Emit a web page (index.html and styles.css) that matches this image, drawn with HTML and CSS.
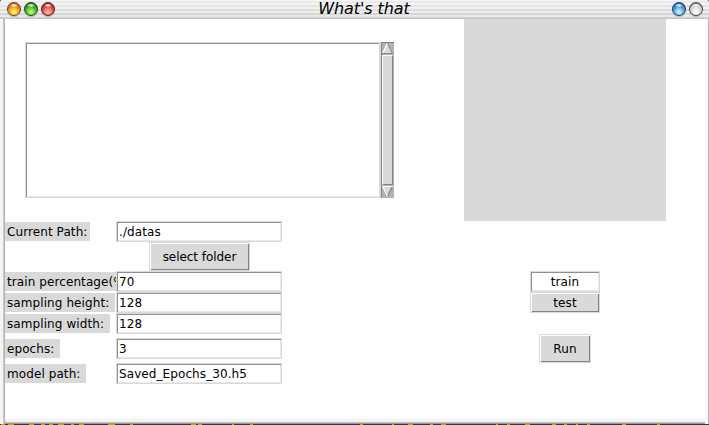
FILE: index.html
```html
<!DOCTYPE html>
<html lang="en">
<head>
<meta charset="utf-8">
<title>What's that</title>
<link rel="stylesheet" href="styles.css">
</head>
<body>
<div class="window">
  <header class="titlebar">
    <div class="controls">
      <span class="orb amber"></span><span class="orb green"></span><span class="orb red"></span>
    </div>
    <h1 class="title">What's that</h1>
    <div class="controls end">
      <span class="orb blue"></span><span class="orb clear"></span>
    </div>
  </header>
  <div class="frame">
    <main class="client">
      <div class="log">
        <div class="listbox"></div>
        <div class="scrollbar">
          <svg width="11" height="11" viewBox="0 0 11 11"><path d="M5.500 0 11 11H0z" fill="#d9d9d9"/><path d="M5.500 0 .5 11" stroke="#fff" stroke-width="1.300"/><path d="M5.500 0 10.500 11M0 10.500H11" stroke="#828282"/></svg>
          <div class="thumb"></div>
          <svg width="11" height="11" viewBox="0 0 11 11"><path d="M0 0H11L5.500 11z" fill="#d9d9d9"/><path d="M10.500 0 5.500 10.500" stroke="#828282" stroke-width="1.300"/><path d="M.5 0 5.500 10.500M0 .5H11" stroke="#fff"/></svg>
        </div>
      </div>
      <div class="canvas"></div>

      <div class="label w85">Current Path:</div>
      <div class="entry">./datas</div>
      <div class="button folder">select folder</div>
      <div class="label clipped">train percentage(%):</div>
      <div class="entry">70</div>
      <div class="button mode selected">train</div>
      <div class="label w110">sampling height:</div>
      <div class="entry">128</div>
      <div class="button mode">test</div>
      <div class="label w105">sampling width:</div>
      <div class="entry">128</div>
      <div class="label w55">epochs:</div>
      <div class="entry">3</div>
      <div class="button run">Run</div>
      <div class="label w81">model path:</div>
      <div class="entry">Saved_Epochs_30.h5</div>
    </main>
  </div>
  <svg class="desktop" width="709" height="1" shape-rendering="crispEdges"><path d="M1 .5h4m3 0h6m15 0h5m7 0h4m4 0h4m5 0h6m7 0h3m5 0h5m24 0h7m15 0h3m58 0h5m2 0h4m30 0h2m16 0h3m107 0h3m29 0h2m14 0h5m17 0h3m8 0h5m50 0h2m9 0h3m15 0h5m22 0h4m8 0h3m9 0h2m9 0h3m32 0h4m31 0h3" stroke="#b4ab18"/></svg>
</div>
</body>
</html>
```
FILE: styles.css
```css
* { box-sizing: border-box; }
body {
  margin: 0;
  overflow: hidden;
  color: #000;
  font: 12px/16px "DejaVu Sans", sans-serif;
  letter-spacing: .09px;
}
.window {
  display: grid;
  grid-template-rows: 19px 405px 1px;
  width: 709px;
  height: 425px;
  background: #39363b;
}
.titlebar {
  display: grid;
  grid-template-columns: 60px 1fr 60px;
  padding: 0 1px 0 2px;
  border-top: 1px solid #f4f4f4;
  border-bottom: 1px solid #c6c6c6;
  border-radius: 2px 2px 0 0;
  background: repeating-linear-gradient(#fff0 0 2px, #fff8 2px 4px), linear-gradient(#ececec, #d0d0d0);
}
.controls {
  display: flex;
  gap: 3px;
  padding: 1px 0 0 5px;
}
.controls.end {
  justify-content: flex-end;
  padding: 1px 5px 0 0;
}
.title {
  margin: 0;
  font-size: 16px;
  font-style: oblique;
  font-weight: normal;
  line-height: 15px;
  letter-spacing: -.1px;
  text-align: center;
  padding-left: 18px;
}
.orb {
  width: 14px;
  height: 14px;
  border: 1px solid var(--rim);
  border-radius: 50%;
  background: radial-gradient(ellipse 4px 2px at 50% 20%, #fffd 20%, #fff0 100%), radial-gradient(circle at 50% 75%, var(--glow) 10%, var(--core) 60%, var(--rim) 100%);
  box-shadow: 0 1px 1px #8889;
}
.amber { --rim: #7b3d18; --glow: #fff45a; --core: #e87b25; }
.green { --rim: #174c0c; --glow: #a8f568; --core: #359c20; }
.red { --rim: #651b1b; --glow: #ffaaa0; --core: #ce3b3b; }
.blue { --rim: #123e70; --glow: #c0ecff; --core: #3b8ac9; }
.clear { --rim: #444; --glow: #fff; --core: #cacaca; }
.frame {
  display: flex;
  padding: 0 4px 5px 5px;
  background:
    linear-gradient(90deg, #f4f4f4 3px, #c8c8c8 3px 4px, #b4b4b4 4px 5px, #fff0 5px),
    linear-gradient(270deg, #b8b8b8 1px, #f7f7f7 1px 4px, #fff0 4px),
    linear-gradient(0deg, #999 1px, #c4c4c4 1px 2px, #f2f2f2 2px 5px, #fff 5px);
}
.client {
  display: grid;
  grid-template-columns: 111px 166px 182px 202px;
  grid-template-rows: 202px 21px 29px 21px 21px 21px 29px 21px;
  align-items: center;
  align-content: start;
  width: 700px;
  background: #fff;
}
.log {
  grid-column: 1 / 4;
  grid-row: 1;
  align-self: start;
  display: flex;
  margin: 23px 0 0 20px;
}
.listbox {
  width: 356px;
  height: 156px;
  border: 1px solid #d9d9d9;
  border-right-width: 2px;
  box-shadow: inset 1px 1px #909090, inset 0 -1px #e8e8e8;
}
.scrollbar {
  display: flex;
  flex-direction: column;
  width: 13px;
  height: 156px;
  padding: 0 1px 1px 0;
  border-left: 1px solid #828282;
  border-top: 1px solid #828282;
  background: #b3b3b3;
}
.thumb {
  flex: 1;
  margin: 1px 0;
  border: 1px solid;
  border-color: #fff #828282 #828282 #fff;
  background: #d9d9d9;
}
.canvas {
  grid-column: 4;
  grid-row: 1;
  height: 202px;
  background: #d9d9d9;
}
.label {
  grid-column: 1;
  height: 19px;
  padding: 1px 0 0 2px;
  background: #d9d9d9;
  line-height: 19px;
  white-space: nowrap;
}
.w85 { width: 85px; }
.w110 { width: 110px; }
.w105 { width: 105px; }
.w55 { width: 55px; }
.w81 { width: 81px; }
.clipped { overflow: hidden; }
.entry {
  grid-column: 2;
  height: 21px;
  padding: 1px 0 0 2px;
  border: 1px solid #d9d9d9;
  background: #fff;
  box-shadow: inset 1px 1px #909090, inset -1px -1px #e8e8e8;
  line-height: 19px;
}
.button {
  justify-self: center;
  padding-top: 1px;
  border: 1px solid #d9d9d9;
  background: #d9d9d9;
  box-shadow: inset 1px 1px #fff, inset -1px -1px #828282;
  text-align: center;
}
.folder {
  grid-column: 2;
  width: 101px;
  height: 29px;
  padding-left: 1px;
  line-height: 27px;
  letter-spacing: -.05px;
}
.mode {
  grid-column: 4;
  width: 70px;
  height: 21px;
  line-height: 19px;
}
.selected {
  background: #fff;
  box-shadow: inset 1px 1px #909090, inset -1px -1px #e8e8e8;
}
.run {
  grid-column: 4;
  width: 52px;
  height: 29px;
  line-height: 27px;
}
.desktop { display: block; }
```
